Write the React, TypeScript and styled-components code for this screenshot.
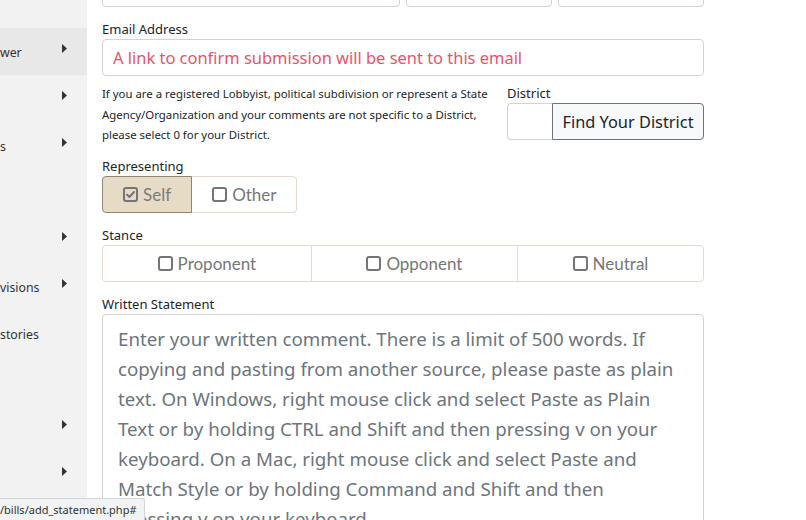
import React from "react";
import styled, { createGlobalStyle } from "styled-components";

const Global = createGlobalStyle`
  html, body { margin: 0; padding: 0; background: #ffffff; overflow: hidden; }
  * { box-sizing: border-box; }
`;

const SANS = `"Noto Sans", "Open Sans", sans-serif`;

const Page = styled.div`
  position: relative;
  display: flex;
  width: 806px;
  height: 520px;
  overflow: hidden;
  font-family: ${SANS};
  color: #212529;
`;

const Sidebar = styled.nav`
  width: 87px;
  flex-shrink: 0;
  background: #f2f2f2;
  padding-top: 28px;
  display: flex;
  flex-direction: column;
`;

const NavItem = styled.div<{ $active?: boolean }>`
  height: 47px;
  display: flex;
  align-items: center;
  justify-content: space-between;
  padding-right: 20px;
  background: ${(p) => (p.$active ? "#e8e8e8" : "transparent")};
  font-size: 12.3px;
  color: #333;
  white-space: nowrap;
`;

const NavText = styled.span`
  margin-top: 1px;
`;

const CaretBox = styled.span`
  display: flex;
  width: 5px;
  margin-left: auto;
  margin-bottom: 7px;
`;

const Caret = () => (
  <CaretBox>
    <svg width="5" height="9" viewBox="0 0 5 9">
      <path d="M0 0 L5 4.5 L0 9 Z" fill="#333" />
    </svg>
  </CaretBox>
);

const Main = styled.main`
  flex: 1;
  padding-left: 15px;
`;

const Form = styled.div`
  width: 602px;
  display: flex;
  flex-direction: column;
  margin-top: -31px;
`;

const TopRow = styled.div`
  display: flex;
  gap: 6px;
  height: 38px;
`;

const BoxInput = styled.div<{ $w: number }>`
  width: ${(p) => p.$w}px;
  height: 38px;
  border: 1px solid #ced4da;
  border-radius: 4px;
`;

const FieldLabel = styled.label`
  display: block;
  font-size: 13px;
  line-height: 18px;
  margin: 13px 0 1px;
  color: #212529;
`;

const EmailInput = styled.input`
  width: 100%;
  height: 37px;
  border: 1px solid #ced4da;
  border-radius: 4px;
  padding: 0 10px;
  font-family: ${SANS};
  font-size: 16.45px;
  outline: none;
  &::placeholder { color: #e2566a; opacity: 1; }
`;

const InfoRow = styled.div`
  display: flex;
  gap: 12px;
  margin-top: 8px;
`;

const Info = styled.p`
  flex: 1;
  margin: 0;
  font-size: 11.4px;
  line-height: 20.5px;
  color: #212529;
`;

const DistrictCol = styled.div`
  width: 197px;
  display: flex;
  flex-direction: column;
`;

const DistrictLabel = styled(FieldLabel)`
  margin: 0 0 1px;
`;

const InputGroup = styled.div`
  display: flex;
  height: 37px;
`;

const DistrictInput = styled.input`
  width: 45px;
  height: 37px;
  border: 1px solid #ced4da;
  border-right: none;
  border-radius: 4px 0 0 4px;
  outline: none;
`;

const FindButton = styled.button`
  flex: 1;
  height: 37px;
  background: #f8f9fa;
  border: 1px solid #6c757d;
  border-radius: 0 4px 4px 0;
  font-family: ${SANS};
  font-size: 16.35px;
  color: #212529;
  padding: 0;
`;

const GroupLabel = styled(FieldLabel)`
  margin-top: 11.5px;
`;

const ToggleGroup = styled.div<{ $full?: boolean }>`
  display: flex;
  align-self: ${(p) => (p.$full ? "stretch" : "flex-start")};
  height: 37px;
`;

const Toggle = styled.div<{ $active?: boolean }>`
  position: relative;
  z-index: ${(p) => (p.$active ? 1 : 0)};
  flex: 1 1 auto;
  display: flex;
  align-items: center;
  justify-content: center;
  gap: 5px;
  padding: 0 20px;
  border: 1px solid ${(p) => (p.$active ? "#8f8676" : "#e3dccd")};
  background: ${(p) => (p.$active ? "#e6dcc6" : "#ffffff")};
  font-family: Lato, sans-serif;
  font-size: 17px;
  color: ${(p) => (p.$active ? "#7b7b7b" : "#777777")};
  white-space: nowrap;
  & + & { margin-left: -1px; }
  &:first-child { border-radius: 4px 0 0 4px; }
  &:last-child { border-radius: 0 4px 4px 0; }
`;

const CheckIcon = ({ checked }: { checked?: boolean }) => (
  <svg width="15" height="15" viewBox="0 0 15 15">
    <rect x="1" y="1" width="13" height="13" rx="2" fill="none" stroke="#757575" strokeWidth="2" />
    {checked && (
      <path d="M4 7.6 L6.4 10 L11 5" fill="none" stroke="#757575" strokeWidth="2" strokeLinecap="round" strokeLinejoin="round" />
    )}
  </svg>
);

const Statement = styled.textarea`
  width: 100%;
  height: 260px;
  border: 1px solid #ced4da;
  border-radius: 4px;
  padding: 9px 26px 9px 15px;
  font-family: ${SANS};
  font-size: 18.7px;
  line-height: 30px;
  resize: none;
  outline: none;
  &::placeholder { color: #6c757d; opacity: 1; }
`;

const StatusBar = styled.div`
  position: absolute;
  left: 0;
  bottom: 0;
  height: 22px;
  padding: 0 7px 0 0;
  display: flex;
  align-items: center;
  background: #f1f3f4;
  border-top: 1px solid #d3d5d8;
  border-right: 1px solid #d3d5d8;
  border-top-right-radius: 3px;
  font-family: ${SANS};
  font-size: 11px;
  color: #333;
`;

const navItems: { text: string; caret: boolean; active?: boolean }[] = [
  { text: "wer", caret: true, active: true },
  { text: "", caret: true },
  { text: "s", caret: true },
  { text: "", caret: false },
  { text: "", caret: true },
  { text: "visions", caret: true },
  { text: "stories", caret: false },
  { text: "", caret: false },
  { text: "", caret: true },
  { text: "", caret: true },
];

export default function App() {
  return (
    <>
      <Global />
      <Page>
        <Sidebar>
          {navItems.map((n, i) => (
            <NavItem key={i} $active={n.active}>
              <NavText>{n.text}</NavText>
              {n.caret && <Caret />}
            </NavItem>
          ))}
        </Sidebar>
        <Main>
          <Form>
            <TopRow>
              <BoxInput $w={298} />
              <BoxInput $w={146} />
              <BoxInput $w={146} />
            </TopRow>

            <FieldLabel>Email Address</FieldLabel>
            <EmailInput placeholder="A link to confirm submission will be sent to this email" />

            <InfoRow>
              <Info>
                If you are a registered Lobbyist, political subdivision or represent a State Agency/Organization and your comments are not specific to a District, please select 0 for your District.
              </Info>
              <DistrictCol>
                <DistrictLabel>District</DistrictLabel>
                <InputGroup>
                  <DistrictInput />
                  <FindButton>Find Your District</FindButton>
                </InputGroup>
              </DistrictCol>
            </InfoRow>

            <GroupLabel>Representing</GroupLabel>
            <ToggleGroup>
              <Toggle $active>
                <CheckIcon checked />
                Self
              </Toggle>
              <Toggle>
                <CheckIcon />
                Other
              </Toggle>
            </ToggleGroup>

            <FieldLabel>Stance</FieldLabel>
            <ToggleGroup $full>
              <Toggle>
                <CheckIcon />
                Proponent
              </Toggle>
              <Toggle>
                <CheckIcon />
                Opponent
              </Toggle>
              <Toggle>
                <CheckIcon />
                Neutral
              </Toggle>
            </ToggleGroup>

            <FieldLabel>Written Statement</FieldLabel>
            <Statement placeholder="Enter your written comment. There is a limit of 500 words. If copying and pasting from another source, please paste as plain text. On Windows, right mouse click and select Paste as Plain Text or by holding CTRL and Shift and then pressing v on your keyboard. On a Mac, right mouse click and select Paste and Match Style or by holding Command and Shift and then pressing v on your keyboard." />
          </Form>
        </Main>
        <StatusBar>/bills/add_statement.php#</StatusBar>
      </Page>
    </>
  );
}
